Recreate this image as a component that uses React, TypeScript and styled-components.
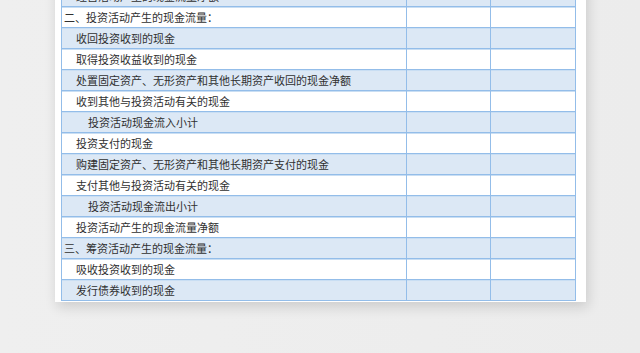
import styled, { createGlobalStyle } from 'styled-components'

const GlobalStyle = createGlobalStyle`
  html, body {
    margin: 0;
    padding: 0;
    background: #ededed;
    overflow: hidden;
  }
`

const Stage = styled.div`
  width: 640px;
  height: 353px;
  overflow: hidden;
  background: linear-gradient(90deg, #efefef 0%, #ececec 100%);
  padding-left: 55px;
  box-sizing: border-box;
`

const Paper = styled.div`
  width: 531px;
  margin-top: -19px;
  padding: 4px 11px 1px 6px;
  box-sizing: border-box;
  background: #fff;
  box-shadow: 2px 5px 12px rgba(0, 0, 0, 0.14);
`

const Sheet = styled.table`
  width: 514px;
  border-collapse: collapse;
  table-layout: fixed;
  font-family: 'Noto Sans CJK SC', 'Microsoft YaHei', sans-serif;
  font-size: 11px;
  color: #303030;
`

const Row = styled.tr<{ $shaded: boolean }>`
  height: 21px;
  background: ${(p) => (p.$shaded ? '#dce8f5' : '#ffffff')};
`

const Cell = styled.td<{ $level?: number }>`
  border: 1px solid #93bde9;
  box-shadow: inset 0 1px 0 #c9def3;
  padding: 0 0 0 ${(p) => 2 + (p.$level ?? 0) * 12}px;
  height: 20px;
  line-height: 20px;
  white-space: nowrap;
  overflow: hidden;
`

const items: [string, number][] = [
  ['经营活动产生的现金流量净额', 1],
  ['二、投资活动产生的现金流量：', 0],
  ['收回投资收到的现金', 1],
  ['取得投资收益收到的现金', 1],
  ['处置固定资产、无形资产和其他长期资产收回的现金净额', 1],
  ['收到其他与投资活动有关的现金', 1],
  ['投资活动现金流入小计', 2],
  ['投资支付的现金', 1],
  ['购建固定资产、无形资产和其他长期资产支付的现金', 1],
  ['支付其他与投资活动有关的现金', 1],
  ['投资活动现金流出小计', 2],
  ['投资活动产生的现金流量净额', 1],
  ['三、筹资活动产生的现金流量：', 0],
  ['吸收投资收到的现金', 1],
  ['发行债券收到的现金', 1],
]

export default function App() {
  return (
    <>
      <GlobalStyle />
      <Stage>
        <Paper>
          <Sheet>
            <colgroup>
              <col style={{ width: 345 }} />
              <col style={{ width: 84 }} />
              <col style={{ width: 85 }} />
            </colgroup>
            <tbody>
              {items.map(([label, level], i) => (
                <Row key={label} $shaded={i % 2 === 0}>
                  <Cell $level={level}>{label}</Cell>
                  <Cell />
                  <Cell />
                </Row>
              ))}
            </tbody>
          </Sheet>
        </Paper>
      </Stage>
    </>
  )
}
